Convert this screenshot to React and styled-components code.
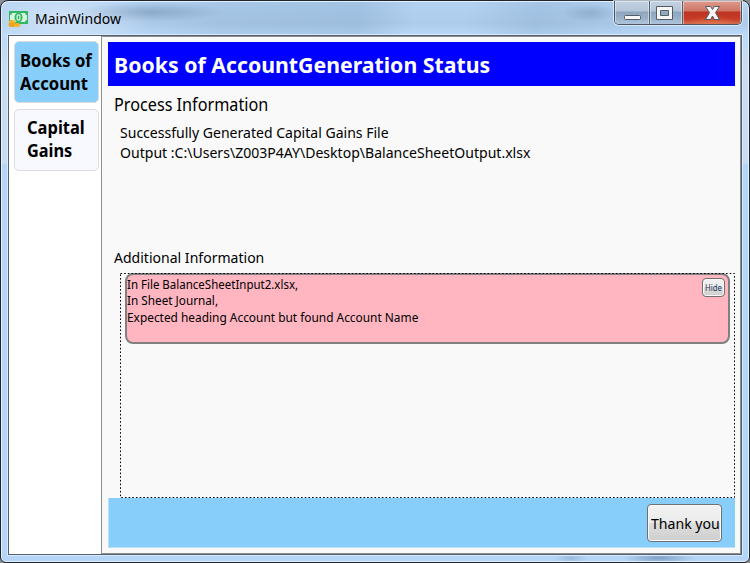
import React from 'react';
import styled, { createGlobalStyle, css } from 'styled-components';

const GlobalStyle = createGlobalStyle`
  * { box-sizing: border-box; }
  html, body { margin: 0; background: #8c8f92; overflow: hidden; }
  body { font-family: "Noto Sans", "Open Sans", sans-serif; color: #000; }
  button { font-family: inherit; color: inherit; margin: 0; padding: 0; }
`;

const Window = styled.div`
  width: 750px;
  height: 563px;
  display: flex;
  flex-direction: column;
  padding: 0 7px 7px;
  border: 1px solid #20242e;
  border-radius: 8px 8px 6px 6px;
  box-shadow: inset 0 0 0 1px #e3f1ff;
  background:
    radial-gradient(ellipse 75px 10px at 150px 11px, rgba(60, 90, 120, 0.3), transparent),
    radial-gradient(ellipse 28px 9px at 589px 12px, rgba(60, 90, 120, 0.22), transparent),
    radial-gradient(ellipse 36px 6px at 658px 557px, rgba(50, 80, 120, 0.4), transparent),
    radial-gradient(ellipse 16px 6px at 570px 557px, rgba(70, 100, 140, 0.25), transparent),
    radial-gradient(ellipse 90px 30px at 60px 18px, rgba(230, 242, 255, 0.65), transparent),
    linear-gradient(100deg, transparent 130px, rgba(105, 142, 178, 0.16) 220px, rgba(105, 142, 178, 0.22) 355px, transparent 410px, transparent 460px, rgba(105, 142, 178, 0.2) 530px, transparent 660px) 0 0 / 100% 34px no-repeat,
    linear-gradient(#b4d3f3 0, #adcbea 22px, #bad9f8 34px, #c9dcf0 60px, #c9dcf0 162px, #b4d5f8 164px, #b4d5f8 100%);
`;

const TitleBar = styled.header`
  height: 34px;
  flex: none;
  display: flex;
  align-items: flex-start;
`;

const AppIcon = styled.svg`
  width: 22px;
  height: 18px;
  margin: 9px 0 0 0;
`;

const Fit = styled.span`
  display: block;
  width: max-content;
  white-space: nowrap;
  transform: scaleX(${p => p.$x || 1});
  transform-origin: 0 50%;
`;

const Title = styled.h1`
  flex: 1;
  margin: 7px 0 0 5px;
  font-size: 14.5px;
  line-height: 20px;
  font-weight: 400;
`;

const Controls = styled.div`
  display: flex;
  height: 24px;
  border: 1px solid #4b5563;
  border-top: 0;
  border-radius: 0 0 5px 5px;
  overflow: hidden;
  box-shadow: 0 0 0 1px rgba(235, 245, 255, 0.7);
`;

const Control = styled.button`
  width: ${p => p.$w}px;
  height: 24px;
  display: block;
  border: 0;
  border-left: ${p => (p.$first ? '0' : '1px solid #56616f')};
  box-shadow: inset 0 0 0 1px rgba(255, 255, 255, 0.45);
  background: ${p => p.$close
    ? 'radial-gradient(ellipse 26px 9px at 50% 100%, rgba(235,130,80,.6), transparent), linear-gradient(#dc9b8e 0, #cf7565 10px, #bd3321 11px, #c63c27 18px, #d8745c 24px)'
    : 'linear-gradient(#c3d2e2 0, #b3c5d8 10px, #8ea5be 11px, #99b0c8 17px, #b3c9df 24px)'};
  svg { display: block; width: 100%; height: 24px; }
`;

const Client = styled.div`
  flex: 1;
  min-height: 0;
  display: flex;
  border: 1px solid #56616f;
  box-shadow: 0 0 0 1px #d9ebfd;
  background: #fff;
`;

const Sidebar = styled.nav`
  width: 92px;
  flex: none;
  display: flex;
  flex-direction: column;
  gap: 6px;
  padding: 5px 0 0 5px;
`;

const NavButton = styled.button`
  width: 85px;
  height: 62px;
  display: flex;
  flex-direction: column;
  align-items: flex-start;
  justify-content: flex-start;
  padding: ${p => p.$top}px 0 0 ${p => p.$left}px;
  text-align: left;
  border: 1px solid #dcdcdc;
  border-radius: 5px;
  background: ${p => (p.$active ? '#87cefa' : '#f8f8ff')};
  font-size: 17px;
  font-weight: 700;
  line-height: 23px;
`;

const Panel = styled.main`
  flex: 1;
  min-width: 0;
  display: flex;
  flex-direction: column;
  padding: 5px 5px 5px 6px;
  border: 1px solid #8c8e90;
  background: #f9f9f9;
`;

const Banner = styled.h2`
  flex: none;
  height: 44px;
  margin: 0;
  padding: 0 6px;
  background: #0000ff;
  color: #fff;
  font-size: 22px;
  line-height: 45px;
  font-weight: 700;
`;

const SectionTitle = styled.h3`
  margin: ${p => p.$top}px 0 0 6px;
  font-weight: 400;
  font-size: ${p => p.$size}px;
  line-height: 24px;
`;

const ProcessText = styled.div`
  height: 109px;
  margin: 6px 0 0 12px;
  font-size: 15px;
  line-height: 20px;
`;

const Messages = styled.div`
  position: relative;
  height: 225px;
  flex: none;
  margin: 4px 0 0 12px;
  padding: 0 5px;
`;

const DottedFrame = styled.svg`
  position: absolute;
  inset: 0;
  width: 100%;
  height: 100%;
`;

const Message = styled.article`
  display: flex;
  justify-content: space-between;
  align-items: flex-start;
  height: 71px;
  padding: 2px 3px 0 0;
  border: 2px solid #808080;
  border-radius: 8px;
  background: #ffb6c1;
  font-size: 12.5px;
  line-height: 16.4px;
`;

const glossy = css`
  border: 1px solid #707070;
  box-shadow: inset 0 0 0 1px #fafafa;
  background: linear-gradient(#f2f2f2 0, #ebebeb 50%, #dddddd 50%, #cfcfcf 100%);
`;

const HideButton = styled.button`
  ${glossy}
  width: 23px;
  height: 19px;
  margin-top: 1px;
  padding-left: 2px;
  border-radius: 4px;
  font-size: 8px;
  line-height: 16px;
  color: #27365e;
`;

const Footer = styled.footer`
  height: 50px;
  flex: none;
  display: flex;
  justify-content: flex-end;
  padding: 6px 13px 0 0;
  border: solid #b9e1fb;
  border-width: 0 0 1px 1px;
  background: #87cefa;
`;

const ThanksButton = styled.button`
  ${glossy}
  width: 75px;
  height: 38px;
  padding-left: 3px;
  border-radius: 4px;
  font-size: 15px;
  line-height: 37px;
`;

const MoneyIcon = () => (
  <AppIcon viewBox="0 0 22 18">
    <rect x="1" y="1" width="19" height="13" fill="#2fb765" />
    <path d="M4 3H17Q17 5 19 5V10Q17 10 17 12H4Q4 10 2 10V5Q4 5 4 3Z" fill="#d7f5dc" />
    <ellipse cx="10.500" cy="7.500" rx="4" ry="4.800" fill="#2fb765" />
    <ellipse cx="10.500" cy="7.500" rx="1.500" ry="2.700" fill="none" stroke="#d7f5dc" strokeWidth="1.200" />
    <ellipse cx="4" cy="12" rx="3.400" ry="2" fill="#f6b32a" />
    <ellipse cx="4" cy="15" rx="3.400" ry="2" fill="#eda21c" />
    <ellipse cx="9" cy="15" rx="3.400" ry="2.100" fill="#f6b32a" />
  </AppIcon>
);

export default function App() {
  return (
    <>
      <GlobalStyle />
      <Window>
        <TitleBar>
          <MoneyIcon />
          <Title><Fit $x={0.966}>MainWindow</Fit></Title>
          <Controls>
            <Control $w={34} $first aria-label="Minimize">
              <svg viewBox="0 0 34 24"><rect x="9.5" y="14.5" width="16" height="4" rx="1" fill="#f7f7f7" stroke="#535c69" /></svg>
            </Control>
            <Control $w={33} aria-label="Maximize">
              <svg viewBox="0 0 32 24"><path fillRule="evenodd" d="M6.500 5.500H22.500V18.500H6.500ZM10.500 9.500V14.500H18.500V9.500Z" fill="#f7f7f7" stroke="#535c69" /></svg>
            </Control>
            <Control $w={59} $close aria-label="Close">
              <svg viewBox="0 0 58 24"><path d="M22.500 5.500H27.500L29.500 8.500L31.500 5.500H36.500L32.500 11.700L36.500 18.500H31.500L29.500 15L27.500 18.500H22.500L26.500 11.700Z" fill="#f7f7f7" stroke="#535c69" strokeLinejoin="round" /></svg>
            </Control>
          </Controls>
        </TitleBar>
        <Client>
          <Sidebar>
            <NavButton $active $top={7} $left={5}><Fit $x={0.98}>Books of</Fit><Fit $x={0.98}>Account</Fit></NavButton>
            <NavButton $top={6} $left={12}><Fit $x={0.97}>Capital</Fit><Fit $x={0.96}>Gains</Fit></NavButton>
          </Sidebar>
          <Panel>
            <Banner><Fit $x={0.967}>Books of AccountGeneration Status</Fit></Banner>
            <SectionTitle $top={6} $size={18}><Fit $x={0.9}>Process Information</Fit></SectionTitle>
            <ProcessText>
              <Fit $x={0.936}>Successfully Generated Capital Gains File</Fit>
              <Fit $x={0.937}>Output :C:\Users\Z003P4AY\Desktop\BalanceSheetOutput.xlsx</Fit>
            </ProcessText>
            <SectionTitle $top={14} $size={15}><Fit $x={0.936}>Additional Information</Fit></SectionTitle>
            <Messages>
              <Message>
                <div>
                  <Fit $x={0.92}>In File BalanceSheetInput2.xlsx,</Fit>
                  <Fit $x={0.94}>In Sheet Journal,</Fit>
                  <Fit $x={0.951}>Expected heading Account but found Account Name</Fit>
                </div>
                <HideButton><Fit $x={0.97}>Hide</Fit></HideButton>
              </Message>
              <DottedFrame>
                <rect x="0.5" y="0.5" width="614" height="224" fill="none" stroke="#000" strokeDasharray="1.6 2.070" />
              </DottedFrame>
            </Messages>
            <Footer><ThanksButton><Fit $x={0.94}>Thank you</Fit></ThanksButton></Footer>
          </Panel>
        </Client>
      </Window>
    </>
  );
}
